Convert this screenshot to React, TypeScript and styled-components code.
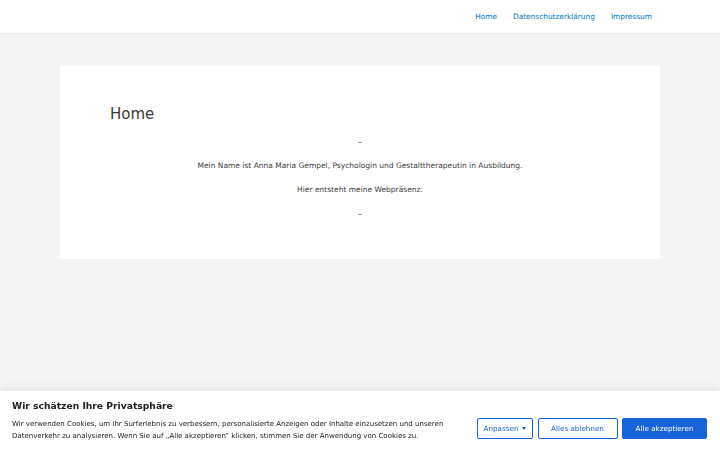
import styled, { createGlobalStyle } from "styled-components";

const GlobalStyle = createGlobalStyle`
  html, body {
    margin: 0;
    padding: 0;
    background: #f5f5f5;
    font-family: "DejaVu Sans", "Liberation Sans", sans-serif;
    color: #3a3a3a;
  }
`;

const S = {
  Header: styled.header`
    height: 34px;
    background: #ffffff;
    border-bottom: 1px solid #eaeaea;
    box-sizing: border-box;
    display: flex;
    justify-content: flex-end;
    align-items: center;
    padding: 0 68px 0 0;
  `,
  Nav: styled.nav`
    display: flex;
    gap: 16px;

    > a {
      font-size: 7.4px;
      color: #0274be;
      text-decoration: none;
    }
  `,
  Main: styled.main`
    display: flex;
    justify-content: center;
    padding-top: 32px;
  `,
  Card: styled.article`
    width: 600px;
    height: 193px;
    box-sizing: border-box;
    background: #ffffff;
    padding: 39px 50px 0;
  `,
  Title: styled.h1`
    margin: 0 0 13px;
    font-size: 15px;
    font-weight: 400;
    line-height: 18px;
    color: #3a3a3a;
  `,
  Body: styled.div`
    display: flex;
    flex-direction: column;
    align-items: center;
    gap: 12px;
  `,
  Para: styled.p`
    margin: 0;
    font-size: 7.5px;
    line-height: 12px;
    color: #3a3a3a;
    text-align: center;
  `,
  Dash: styled.span`
    display: block;
    width: 4px;
    height: 1px;
    margin: 6px 0 5px;
    background: #9a9a9a;
  `,
  Banner: styled.section`
    position: fixed;
    left: 0;
    right: 0;
    bottom: 0;
    height: 59px;
    box-sizing: border-box;
    background: #ffffff;
    box-shadow: 0 -1px 10px rgba(172, 171, 171, 0.3);
    padding: 9px 13px 0 12px;
    color: #212121;
  `,
  BannerTitle: styled.h2`
    margin: 0 0 5px;
    font-size: 9.2px;
    line-height: 12px;
    font-weight: 700;
    color: #212121;
  `,
  BannerRow: styled.div`
    display: flex;
    justify-content: space-between;
    align-items: flex-start;
  `,
  BannerText: styled.p`
    margin: 1px 0 0;
    font-size: 7px;
    line-height: 12px;
    color: #212121;
  `,
  Buttons: styled.div`
    display: flex;
    gap: 4.5px;
    margin-top: 1px;
  `,
  Button: styled.button<{ $primary?: boolean; $w: number }>`
    width: ${({ $w }) => $w}px;
    height: 21px;
    box-sizing: border-box;
    display: flex;
    align-items: center;
    justify-content: center;
    gap: 4px;
    padding: 0;
    font-family: "DejaVu Sans", "Liberation Sans", sans-serif;
    font-size: 7.2px;
    border-radius: 2px;
    border: 1.5px solid #1863dc;
    background: ${({ $primary }) => ($primary ? "#1863dc" : "#ffffff")};
    color: ${({ $primary }) => ($primary ? "#ffffff" : "#1863dc")};
    cursor: pointer;
  `,
  Caret: styled.span`
    width: 0;
    height: 0;
    border-left: 2.5px solid transparent;
    border-right: 2.5px solid transparent;
    border-top: 3px solid #1863dc;
  `,
};

export default function App() {
  return (
    <>
      <GlobalStyle />
      <S.Header>
        <S.Nav>
          <a href="#">Home</a>
          <a href="#">Datenschutzerklärung</a>
          <a href="#">Impressum</a>
        </S.Nav>
      </S.Header>
      <S.Main>
        <S.Card>
          <S.Title>Home</S.Title>
          <S.Body>
            <S.Dash />
            <S.Para>Mein Name ist Anna Maria Gempel, Psychologin und Gestalttherapeutin in Ausbildung.</S.Para>
            <S.Para>Hier entsteht meine Webpräsenz.</S.Para>
            <S.Dash />
          </S.Body>
        </S.Card>
      </S.Main>
      <S.Banner>
        <S.BannerTitle>Wir schätzen Ihre Privatsphäre</S.BannerTitle>
        <S.BannerRow>
          <S.BannerText>
            Wir verwenden Cookies, um Ihr Surferlebnis zu verbessern, personalisierte Anzeigen oder Inhalte einzusetzen und unseren
            <br />
            Datenverkehr zu analysieren. Wenn Sie auf „Alle akzeptieren“ klicken, stimmen Sie der Anwendung von Cookies zu.
          </S.BannerText>
          <S.Buttons>
            <S.Button $w={56}>
              Anpassen <S.Caret />
            </S.Button>
            <S.Button $w={80}>Alles ablehnen</S.Button>
            <S.Button $w={85} $primary>
              Alle akzeptieren
            </S.Button>
          </S.Buttons>
        </S.BannerRow>
      </S.Banner>
    </>
  );
}
